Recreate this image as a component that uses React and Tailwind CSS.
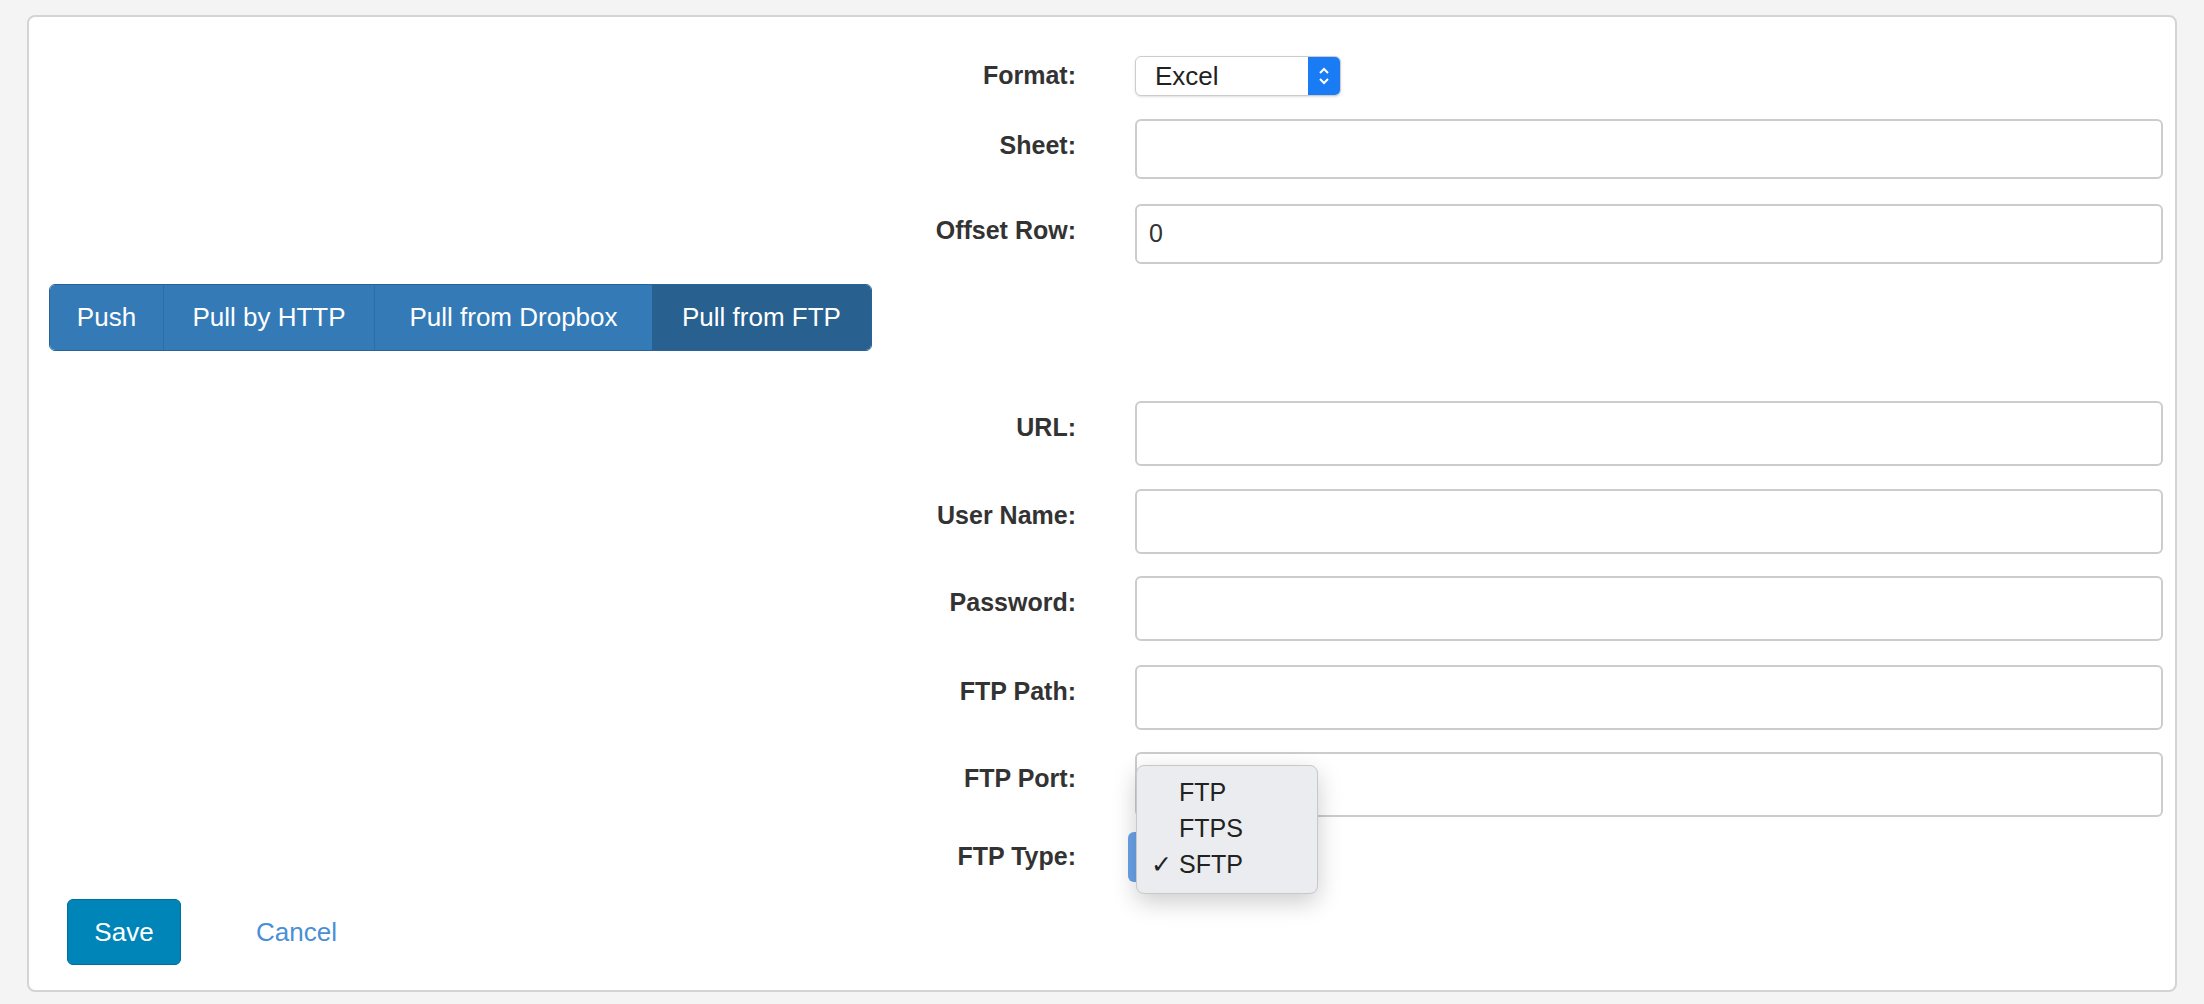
import React from "react";

const labelCls = "w-[1047px] shrink-0 text-right font-bold text-[25px] text-[#333]";

function Row({ label, value = "", h = "h-[60px]", mb = "mb-[25px]" }) {
  return (
    <div className={"flex items-start " + mb}>
      <div className={labelCls + " pt-[8px]"}>{label}</div>
      <div className={"ml-[59px] flex-1 rounded-[6px] border-2 border-[#ccc] bg-white px-3 text-[25px] text-[#333] flex items-center " + h}>{value}</div>
    </div>
  );
}

export default function App() {
  return (
    <div className="w-[2204px] h-[1004px] bg-[#f4f4f4] pt-[15px] px-[27px]" style={{ fontFamily: '"Liberation Sans", Arial, sans-serif' }}>
      <div className="relative h-[977px] bg-white border-2 border-[#d4d4d4] rounded-[8px] pt-[39px] pr-[12px]">
        <div className="flex items-center mb-[23px]">
          <div className={labelCls}>Format:</div>
          <div className="ml-[59px] w-[206px] h-[40px] rounded-[6px] border border-[#ccc] bg-white shadow-sm flex items-center overflow-hidden">
            <span className="flex-1 pl-[19px] text-[26px] text-[#222]">Excel</span>
            <span className="w-[32px] h-full bg-[#1a7cf5] flex items-center justify-center">
              <svg width="12" height="22" viewBox="0 0 12 22" fill="none" stroke="white" strokeWidth="2"><path d="M2 8l4-4 4 4M2 14l4 4 4-4" /></svg>
            </span>
          </div>
        </div>
        <Row label="Sheet:" />
        <Row label="Offset Row:" value="0" mb="mb-[20px]" />
        <div className="ml-[20px] flex w-[823px] h-[67px] rounded-[6px] overflow-hidden border border-[#2a6496] text-white text-[26px]">
          <div className="w-[114px] bg-[#337ab7] border-r border-[#2e6da4] flex items-center justify-center">Push</div>
          <div className="w-[211px] bg-[#337ab7] border-r border-[#2e6da4] flex items-center justify-center">Pull by HTTP</div>
          <div className="w-[277px] bg-[#337ab7] flex items-center justify-center">Pull from Dropbox</div>
          <div className="flex-1 bg-[#286090] flex items-center justify-center">Pull from FTP</div>
        </div>
        <div className="h-[50px]" />
        <Row label="URL:" h="h-[65px]" mb="mb-[23px]" />
        <Row label="User Name:" h="h-[65px]" mb="mb-[22px]" />
        <Row label="Password:" h="h-[65px]" mb="mb-[24px]" />
        <Row label="FTP Path:" h="h-[65px]" mb="mb-[22px]" />
        <Row label="FTP Port:" h="h-[65px]" mb="mb-[15px]" />
        <div className="flex items-center">
          <div className={labelCls}>FTP Type:</div>
          <div className="ml-[52px] w-[40px] h-[50px] rounded-[6px] bg-[#6aa3ea]" />
        </div>
        <div className="flex items-center ml-[38px] mt-[17px] gap-[75px]">
          <div className="w-[114px] h-[66px] rounded-[6px] bg-[#0085b8] border border-[#006f9a] text-white text-[26px] flex items-center justify-center">Save</div>
          <span className="text-[#4a8fd6] text-[26px]">Cancel</span>
        </div>
        <div className="absolute left-[1107px] top-[748px] w-[182px] h-[129px] rounded-[8px] bg-[#ebecef] border border-[#c8c8c8] shadow-[0_8px_24px_rgba(0,0,0,0.2)] pt-[9px] text-[25px] text-[#222]">
          <div className="h-[36px] pl-[42px] flex items-center">FTP</div>
          <div className="h-[36px] pl-[42px] flex items-center">FTPS</div>
          <div className="h-[36px] pl-[14px] flex items-center"><span className="w-[28px]">✓</span>SFTP</div>
        </div>
      </div>
    </div>
  );
}
